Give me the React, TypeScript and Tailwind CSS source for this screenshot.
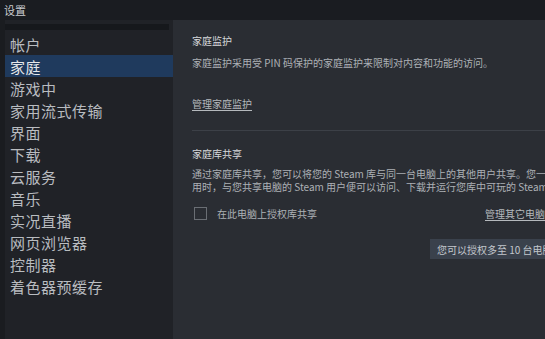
import React from "react";

const items = ["帐户", "家庭", "游戏中", "家用流式传输", "界面", "下载", "云服务", "音乐", "实况直播", "网页浏览器", "控制器", "着色器预缓存"];

export default function App() {
  const font = { fontFamily: '"Noto Sans CJK SC", "Noto Sans", sans-serif' };
  return (
    <div className="w-[545px] h-[339px] overflow-hidden bg-[#1c1e23] flex flex-col" style={font}>
      <div className="h-[20px] shrink-0 flex items-center pl-[4px] text-[11px] text-[#c9cbcf] bg-[#1a1c21]">设置</div>
      <div className="flex flex-1 min-h-0">
        <div className="w-[5px] shrink-0 bg-[#1a1c20]" />
        <div className="w-[168px] shrink-0 bg-[#202227] flex flex-col">
          <div className="h-[4px]" />
          <div className="h-[6px] bg-[#16181c] mr-[4px]" />
          <div className="h-[3px]" />
          {items.map((t, i) => (
            <div
              key={t}
              className={`h-[22px] flex items-center pl-[5px] text-[15px] leading-none tracking-[0.5px] ${i === 1 ? "bg-[#1f3a5d] text-[#e6e8ea]" : "text-[#b9bcc0]"}`}
            >
              {t}
            </div>
          ))}
        </div>
        <div className="flex-1 min-w-0 bg-[#2a2d33] pl-[19px] text-[10px] leading-[13px] overflow-hidden">
          <div className="mt-[14px] text-[#d6d8db]">家庭监护</div>
          <div className="mt-[9px] text-[#adb1b6] whitespace-nowrap">家庭监护采用受 PIN 码保护的家庭监护来限制对内容和功能的访问。</div>
          <div className="mt-[28px] text-[#b5b9bd] underline underline-offset-2">管理家庭监护</div>
          <div className="mt-[20px] h-px bg-[#3c4047]" />
          <div className="mt-[16px] text-[#d6d8db]">家庭库共享</div>
          <div className="mt-[7px] text-[#adb1b6] whitespace-nowrap">
            <div>通过家庭库共享，您可以将您的 Steam 库与同一台电脑上的其他用户共享。您一旦授权此电脑使</div>
            <div>用时，与您共享电脑的 Steam 用户便可以访问、下载并运行您库中可玩的 Steam 游戏。</div>
          </div>
          <div className="mt-[14px] flex items-center whitespace-nowrap">
            <div className="ml-[2px] w-[13px] h-[13px] border border-[#6a6e74] bg-[#2a2d33]" />
            <div className="ml-[10px] text-[#adb1b6]">在此电脑上授权库共享</div>
            <div className="ml-[168px] text-[#b5b9bd] underline underline-offset-2">管理其它电脑</div>
          </div>
          <div className="mt-[19px] ml-[238px] h-[20px] w-[160px] flex items-center pl-[7px] bg-[#3a414c] text-[#c3c7cc] whitespace-nowrap">您可以授权多至 10 台电脑</div>
        </div>
      </div>
    </div>
  );
}
